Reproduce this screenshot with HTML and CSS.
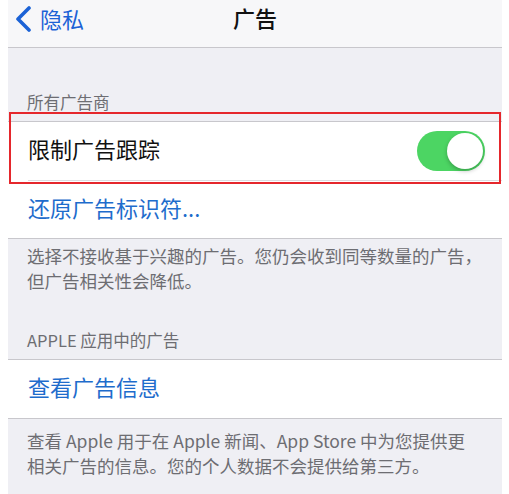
FILE: index.html
```html
<!DOCTYPE html>
<html lang="zh-CN">
<head>
	<meta charset="UTF-8">
	<title>广告</title>
	<link rel="stylesheet" href="styles.css">
</head>
<body>
	<div class='screen'>
		<div class='nav'>
			<a class='back' href='#'>
				<svg class='chevron' width="17" height="26" viewBox="0 0 17 26">
					<path d="M14 2 L3 13 L14 24" fill="none" stroke="#1b62d6" stroke-width="3.6" stroke-linecap="round" stroke-linejoin="round"/>
				</svg>
				<span>隐私</span>
			</a>
			<h1 class='title'>广告</h1>
		</div>

		<div class='group-head first'>所有广告商</div>
		<div class='group'>
			<div class='cell'>
				<span class='label'>限制广告跟踪</span>
				<span class='switch on'><span class='knob'></span></span>
			</div>
			<div class='cell'>
				<a class='link' href='#'>还原广告标识符...</a>
			</div>
			<div class='mark'></div>
		</div>
		<p class='group-foot'>选择不接收基于兴趣的广告。您仍会收到同等数量的广告，但广告相关性会降低。</p>

		<div class='group-head'>APPLE 应用中的广告</div>
		<div class='group'>
			<div class='cell'>
				<a class='link' href='#'>查看广告信息</a>
			</div>
		</div>
		<p class='group-foot last'>查看 Apple 用于在 Apple 新闻、App Store 中为您提供更相关广告的信息。您的个人数据不会提供给第三方。</p>
	</div>
</body>
</html>
```

FILE: styles.css
```css
*{
	padding: 0;
	margin: 0;
	box-sizing: border-box;
}
body{
	background: #fff;
	font-family: "Noto Sans CJK SC", "Noto Sans", sans-serif;
}
.screen{
	position: relative;
	width: 494px;
	height: 494px;
	margin-left: 8px;
	background: #efeff4;
	overflow: hidden;
}
.nav{
	position: relative;
	height: 48px;
	background: #f7f7f9;
	border-bottom: 1px solid #c8c7cc;
	display: flex;
	align-items: center;
	justify-content: center;
}
.back{
	position: absolute;
	left: 7px;
	top: 6px;
	display: flex;
	align-items: center;
	gap: 8px;
	color: #1b62d6;
	text-decoration: none;
	font-size: 22px;
	line-height: 26px;
}
.back span{
	margin-top: -3px;
}
.title{
	font-size: 22px;
	font-weight: 500;
	color: #111;
	line-height: 26px;
	margin-top: -14px;
}
.group-head{
	height: 66px;
	padding: 0 0 8px 19px;
	display: flex;
	align-items: flex-end;
	font-size: 16.5px;
	color: #6d6d72;
	line-height: 22px;
}
.group-head.first{
	height: 73px;
}
.group{
	position: relative;
	background: #fff;
	border-top: 1px solid #c8c7cc;
	border-bottom: 1px solid #c8c7cc;
}
.cell{
	height: 58px;
	display: flex;
	align-items: center;
	justify-content: space-between;
	padding: 0 17px 6px 20px;
	font-size: 22px;
	color: #111;
}
.cell + .cell{
	border-top: 1px solid #dcdce0;
	margin-left: 20px;
	padding-left: 0;
}
.link{
	color: #1e6ccc;
	text-decoration: none;
}
.switch{
	position: relative;
	width: 68px;
	height: 40px;
	margin-top: 6px;
	border-radius: 20px;
	background: #4cd563;
}
.knob{
	position: absolute;
	right: 2px;
	top: 2px;
	width: 36px;
	height: 36px;
	border-radius: 50%;
	background: #fff;
	box-shadow: 0 2px 4px rgba(0,0,0,0.25);
}
.mark{
	position: absolute;
	left: 1px;
	top: -10px;
	width: 492px;
	height: 72px;
	border: 2px solid #e5272c;
}
.group-foot{
	padding: 4px 8px 0 19px;
	font-size: 17.5px;
	line-height: 25px;
	color: #6d6d72;
}
.group-foot.last{
	padding: 9px 25px 0 19px;
}
```
